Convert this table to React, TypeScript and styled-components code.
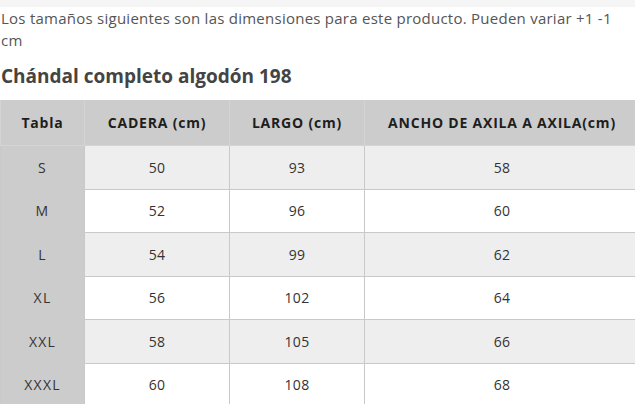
import React from "react";
import styled, { createGlobalStyle } from "styled-components";

const Global = createGlobalStyle`
  html, body { margin: 0; padding: 0; background: #fff; }
  body { font-family: "Open Sans", "Liberation Sans", sans-serif; }
`;

const Page = styled.div`
  border-top: 7px solid #f5f5f5;
  padding: 0 0 0 1px;
  width: 635px;
  box-sizing: border-box;
`;

const Intro = styled.p`
  margin: 0;
  width: 615px;
  font-size: 15px;
  letter-spacing: 0.25px;
  line-height: 22px;
  color: #555;
`;

const Title = styled.h2`
  margin: 12px 0 11px;
  font-size: 19px;
  line-height: 26px;
  font-weight: 700;
  color: #444;
`;

const Table = styled.table`
  border-collapse: collapse;
  width: 635px;
  margin-left: -1px;
  table-layout: fixed;
  font-size: 14px;
  color: #333;
`;

const Th = styled.th<{ $w: number }>`
  width: ${(p) => p.$w}px;
  height: 45px;
  background: #cccccc;
  color: #1e1e1e;
  font-weight: 700;
  letter-spacing: 0.8px;
  text-align: center;
  border: 1px solid #d4d4d4;
  border-top: none;
  padding: 0;
`;

const Row = styled.tr<{ $alt: boolean }>`
  background: ${(p) => (p.$alt ? "#eeeeee" : "#ffffff")};
`;

const Td = styled.td<{ $head?: boolean }>`
  height: 42.5px;
  text-align: center;
  padding: 0;
  letter-spacing: ${(p) => (p.$head ? "1.2px" : "0.3px")};
  border: 1px solid #c9c9c9;
  ${(p) => (p.$head ? "background: #cccccc; border-color: #cccccc #c9c9c9;" : "")}
`;

const rows = [
  ["S", "50", "93", "58"],
  ["M", "52", "96", "60"],
  ["L", "54", "99", "62"],
  ["XL", "56", "102", "64"],
  ["XXL", "58", "105", "66"],
  ["XXXL", "60", "108", "68"],
];

export default function App() {
  return (
    <>
      <Global />
      <Page>
        <Intro>
          Los tamaños siguientes son las dimensiones para este producto. Pueden variar +1 -1 cm
        </Intro>
        <Title>Chándal completo algodón 198</Title>
        <Table>
          <thead>
            <tr>
              <Th $w={83}>Tabla</Th>
              <Th $w={144}>CADERA (cm)</Th>
              <Th $w={134}>LARGO (cm)</Th>
              <Th $w={274}>ANCHO DE AXILA A AXILA(cm)</Th>
            </tr>
          </thead>
          <tbody>
            {rows.map((r, i) => (
              <Row key={r[0]} $alt={i % 2 === 0}>
                {r.map((c, j) => (
                  <Td key={j} $head={j === 0}>
                    {c}
                  </Td>
                ))}
              </Row>
            ))}
          </tbody>
        </Table>
      </Page>
    </>
  );
}
